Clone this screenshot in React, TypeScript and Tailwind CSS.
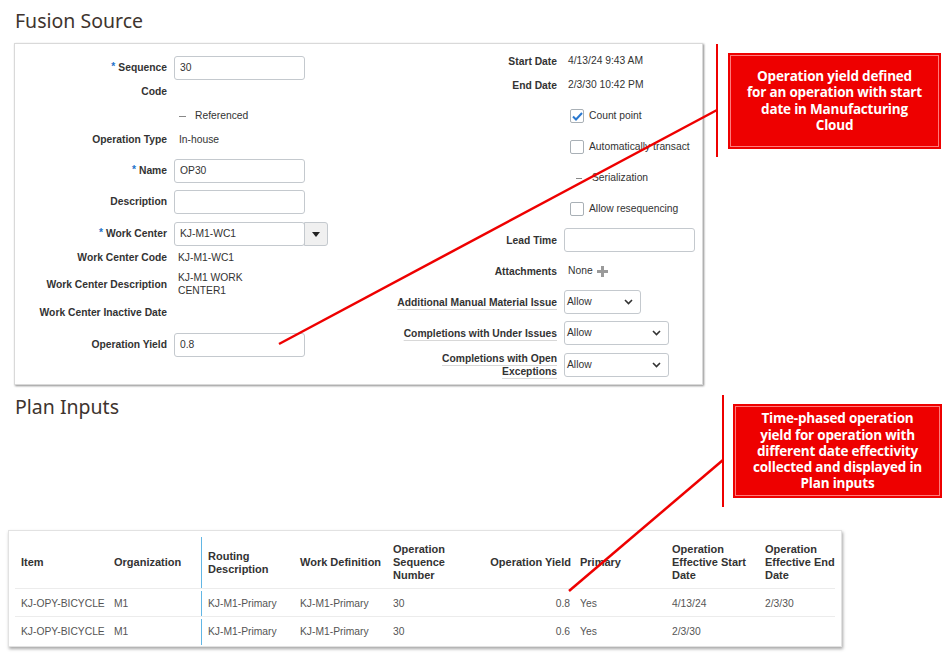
import { ReactNode } from 'react';

const Req = () => <span className="text-[#1f73c9] mr-[3px] relative -top-[1px]">*</span>;

const Input = ({ value = '', w = 'w-[131px]' }: { value?: string; w?: string }) => (
  <div className={`${w} h-[24px] border border-[#c4c9ce] rounded-[3px] bg-white flex items-center px-[5px] text-[#333]`}>{value}</div>
);

const Select = ({ w }: { w: string }) => (
  <div className={`${w} h-[24px] border border-[#c4c9ce] rounded-[3px] bg-white flex items-center justify-between pl-[2px] pr-[7px] text-[#333]`}>
    <span>Allow</span>
    <svg width="9" height="6" viewBox="0 0 9 6">
      <polyline points="1,1 4.5,4.5 8,1" fill="none" stroke="#333" strokeWidth="1.6" />
    </svg>
  </div>
);

const Check = ({ on }: { on?: boolean }) => (
  <div className="w-[14px] h-[14px] border border-[#a9b0b6] rounded-[2px] bg-white flex items-center justify-center ml-[6px] mr-[5px]">
    {on && (
      <svg width="11" height="9" viewBox="0 0 11 9">
        <polyline points="1,4.5 4,7.5 10,1" fill="none" stroke="#2a78cf" strokeWidth="2" />
      </svg>
    )}
  </div>
);

const LRow = ({ label, children, h = 'h-[24px]', cls = '' }: { label: ReactNode; children?: ReactNode; h?: string; cls?: string }) => (
  <div className={`flex items-center ${h} ${cls}`}>
    <div className="w-[152px] text-right font-bold text-[#333]">{label}</div>
    <div className="ml-[7px] flex items-center">{children}</div>
  </div>
);

const RRow = ({ label, children, cls = '', u = false }: { label?: ReactNode; children?: ReactNode; cls?: string; u?: boolean }) => (
  <div className={`flex items-center h-[24px] ${cls}`}>
    <div className={`w-[222px] text-right font-bold text-[#333] leading-[13px] ${u ? 'underline decoration-[#d8d8d8] underline-offset-[3px]' : ''}`}>{label}</div>
    <div className="ml-[7px] flex items-center">{children}</div>
  </div>
);

const Callout = ({ lines, lineH, boxH, boxW, gap }: { lines: string[]; lineH: string; boxH: string; boxW: string; gap: string }) => (
  <div className="flex items-center">
    <div className={`w-[2px] ${lineH} bg-[#ee0000]`} />
    <div className={`${gap} ${boxW} ${boxH} bg-[#ee0000] p-[2px]`}>
      <div className="w-full h-full border border-[#ff7a7a] flex flex-col items-center justify-center text-white font-bold text-[13.5px] leading-[16.3px] text-center font-['Open_Sans',sans-serif] tracking-[-0.2px]">
        {lines.map((l) => (
          <div key={l} className="whitespace-nowrap">{l}</div>
        ))}
      </div>
    </div>
  </div>
);

const cols = 'grid grid-cols-[93px_93px_93px_93px_93px_94px_92px_93px_80px]';

const rows = [
  ['KJ-OPY-BICYCLE', 'M1', 'KJ-M1-Primary', 'KJ-M1-Primary', '30', '0.8', 'Yes', '4/13/24', '2/3/30'],
  ['KJ-OPY-BICYCLE', 'M1', 'KJ-M1-Primary', 'KJ-M1-Primary', '30', '0.6', 'Yes', '2/3/30', ''],
];

export default function App() {
  return (
    <div className="relative w-[952px] h-[664px] bg-white overflow-hidden font-['Liberation_Sans',Arial,sans-serif]">
      <div className="h-[43px] pl-[15px] pt-[7px] text-[19.5px] text-[#3e342e] font-['Noto_Sans',sans-serif] leading-[28px]">Fusion Source</div>

      <div className="flex items-start">
        <div className="ml-[14px] w-[689px] h-[342px] border border-[#d9d9d9] shadow-[1px_1px_2px_rgba(0,0,0,0.45)] flex text-[10.3px]">
          <div className="w-[320px] pt-[12px] flex flex-col">
            <LRow label={<><Req />Sequence</>}><Input value="30" /></LRow>
            <LRow label="Code" />
            <LRow label="">
              <span className="w-[7px] h-[1px] bg-[#888] ml-[5px] mr-[9px]" />
              <span className="text-[#333]">Referenced</span>
            </LRow>
            <LRow label="Operation Type"><span className="ml-[5px] text-[#333]">In-house</span></LRow>
            <LRow label={<><Req />Name</>} cls="mt-[7px]"><Input value="OP30" /></LRow>
            <LRow label="Description" cls="mt-[7px]"><Input /></LRow>
            <LRow label={<><Req />Work Center</>} cls="mt-[8px]">
              <Input value="KJ-M1-WC1" />
              <div className="w-[24px] h-[24px] border border-[#c4c9ce] rounded-r-[3px] bg-[#f0f0f0] -ml-[1px] flex items-center justify-center">
                <svg width="8" height="5" viewBox="0 0 8 5"><polygon points="0,0 8,0 4,5" fill="#222" /></svg>
              </div>
            </LRow>
            <LRow label="Work Center Code"><span className="ml-[4px] text-[#333]">KJ-M1-WC1</span></LRow>
            <LRow label="Work Center Description" h="h-[30px]">
              <span className="ml-[4px] text-[#333] leading-[13px] -mt-[2px]">KJ-M1 WORK<br />CENTER1</span>
            </LRow>
            <LRow label="Work Center Inactive Date" h="h-[26px]" />
            <LRow label="Operation Yield" cls="mt-[7px]"><Input value="0.8" /></LRow>
          </div>

          <div className="flex-1 pt-[5px] flex flex-col">
            <RRow label="Start Date"><span className="ml-[4px] text-[#333]">4/13/24 9:43 AM</span></RRow>
            <RRow label="End Date"><span className="ml-[4px] text-[#333]">2/3/30 10:42 PM</span></RRow>
            <RRow cls="mt-[7px]"><Check on /><span className="text-[#333]">Count point</span></RRow>
            <RRow cls="mt-[7px]"><Check /><span className="text-[#333]">Automatically transact</span></RRow>
            <RRow cls="mt-[7px]">
              <span className="w-[6px] h-[1px] bg-[#888] ml-[12px] mr-[10px]" />
              <span className="text-[#333]">Serialization</span>
            </RRow>
            <RRow cls="mt-[7px]"><Check /><span className="text-[#333]">Allow resequencing</span></RRow>
            <RRow label="Lead Time" cls="mt-[7px]"><Input /></RRow>
            <RRow label="Attachments" cls="mt-[7px]">
              <span className="ml-[4px] text-[#333]">None</span>
              <svg className="ml-[4px]" width="11" height="11" viewBox="0 0 11 11">
                <rect x="4" y="0" width="3" height="11" fill="#9a9a9a" />
                <rect x="0" y="4" width="11" height="3" fill="#9a9a9a" />
              </svg>
            </RRow>
            <RRow label="Additional Manual Material Issue" u cls="mt-[7px]"><Select w="w-[77px]" /></RRow>
            <RRow label="Completions with Under Issues" u cls="mt-[7px]"><Select w="w-[105px]" /></RRow>
            <RRow label={<>Completions with Open<br />Exceptions</>} u cls="mt-[8px]"><Select w="w-[105px]" /></RRow>
          </div>
        </div>

        <div className="ml-[13px] mt-[1px]">
          <Callout
            lines={['Operation yield defined', 'for an operation with start', 'date in Manufacturing', 'Cloud']}
            lineH="h-[113px]"
            boxH="h-[96px]"
            boxW="w-[213px]"
            gap="ml-[10px]"
          />
        </div>
      </div>

      <div className="flex items-start mt-[8px]">
        <div className="pl-[15px] text-[19.5px] text-[#3e342e] font-['Noto_Sans',sans-serif] leading-[28px]">Plan Inputs</div>
        <div className="ml-auto mr-[10px] mt-[2px]">
          <Callout
            lines={['Time-phased operation', 'yield for operation with', 'different date effectivity', 'collected and displayed in', 'Plan inputs']}
            lineH="h-[112px]"
            boxH="h-[94px]"
            boxW="w-[209px]"
            gap="ml-[9px]"
          />
        </div>
      </div>

      <div className="ml-[8px] mt-[23px] w-[834px] h-[117px] border border-[#e2e2e2] shadow-[1px_2px_3px_rgba(0,0,0,0.35)] px-[6px] pt-[6px] text-[11px]">
        <div className={`${cols} h-[52px] items-center border-b border-[#ececec] font-bold text-[#333] leading-[13px]`}>
          <div className="pl-[6px]">Item</div>
          <div className="pl-[6px]">Organization</div>
          <div className="pl-[6px] h-full flex items-center border-l border-[#62b6e4]">Routing<br />Description</div>
          <div className="pl-[6px]">Work Definition</div>
          <div className="pl-[6px]">Operation<br />Sequence<br />Number</div>
          <div className="pr-[3px] text-right">Operation Yield</div>
          <div className="pl-[6px]">Primary</div>
          <div className="pl-[6px]">Operation<br />Effective Start<br />Date</div>
          <div className="pl-[6px] whitespace-nowrap">Operation<br />Effective End<br />Date</div>
        </div>
        {rows.map((r, i) => (
          <div key={i} className={`${cols} h-[28px] pt-[2px] items-center text-[#555] text-[10.3px] whitespace-nowrap ${i === 0 ? 'border-b border-[#ececec]' : ''}`}>
            {r.map((c, j) => (
              <div
                key={j}
                className={
                  j === 5
                    ? 'pr-[4px] text-right'
                    : j === 2
                      ? 'pl-[6px] h-full flex items-center border-l border-[#62b6e4]'
                      : 'pl-[6px]'
                }
              >
                {c}
              </div>
            ))}
          </div>
        ))}
      </div>

      <svg className="absolute inset-0 pointer-events-none" width="952" height="664">
        <line x1="279" y1="344" x2="717" y2="110" stroke="#ee0000" strokeWidth="2.5" />
        <line x1="569" y1="591" x2="723" y2="460" stroke="#ee0000" strokeWidth="2.5" />
      </svg>
    </div>
  );
}
